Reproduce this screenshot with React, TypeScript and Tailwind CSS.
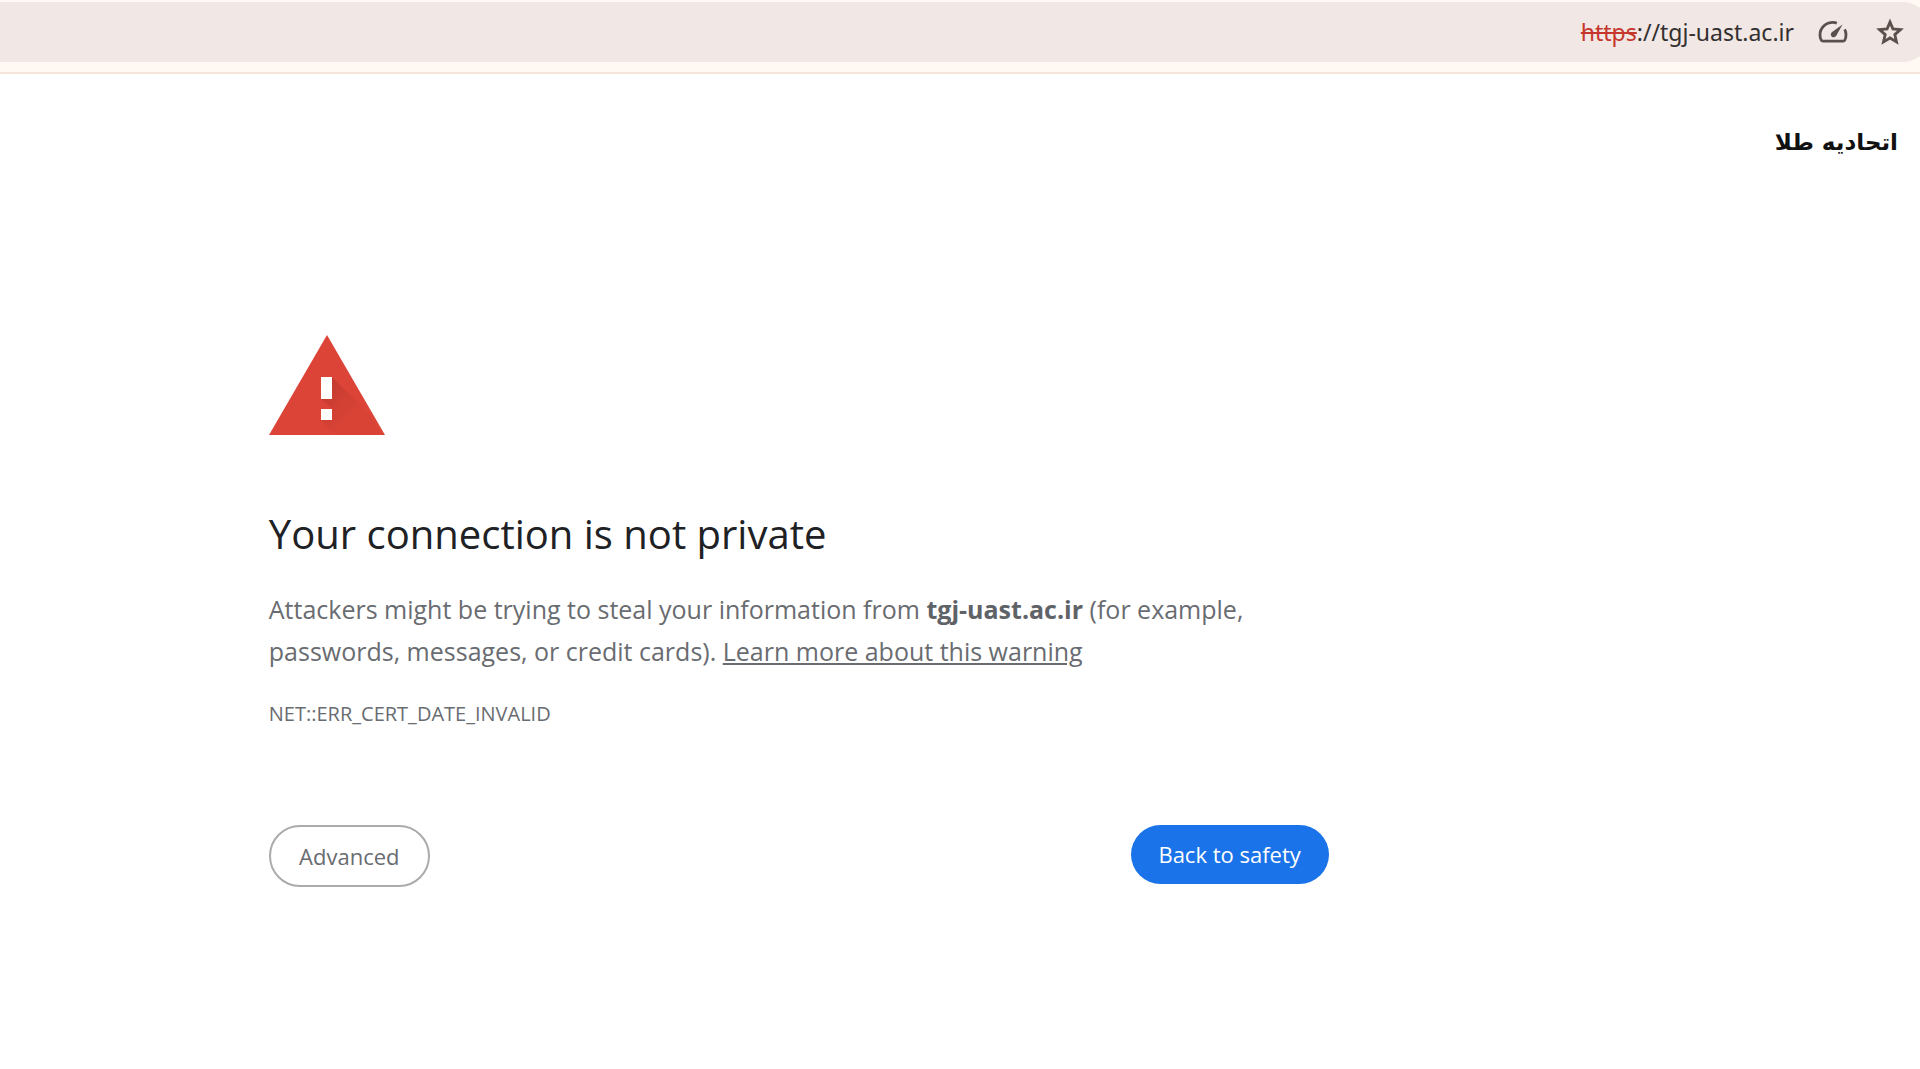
function SpeedIcon() {
  return (
    <svg width="30" height="24" viewBox="0 0 30 24" fill="none">
      <path
        d="M18.8 3.2C17.6 2.6 16.3 2.4 15 2.4 7.7 2.4 2 8 2 15c0 2.2.5 4.1 1.4 5.4.3.5.8.8 1.4.8h20.4c.6 0 1.1-.3 1.4-.8C27.5 19 28 17 28 15c0-2.2-.4-4-1.3-5.6"
        stroke="#5c504c"
        strokeWidth="2.8"
      />
      <path d="M24.5 4.5 18.4 15.5c-1 1.7-3.2 2.3-4.6 1.2-1.5-1.2-1.3-3.3.3-4.6z" fill="#5c504c" />
    </svg>
  )
}

function StarIcon() {
  return (
    <svg width="28" height="28" viewBox="0 0 28 28" fill="none">
      <path
        d="m14 4 2.9 6.9 7.6.7-5.7 5 1.7 7.3-6.5-3.9-6.5 3.9 1.7-7.3-5.7-5 7.6-.7z"
        stroke="#5c504c"
        strokeWidth="2.8"
      />
    </svg>
  )
}

function WarningIcon() {
  return (
    <svg width="116" height="100" viewBox="0 0 116 100" aria-hidden="true">
      <defs>
        <linearGradient id="shade" gradientUnits="userSpaceOnUse" x1="56" y1="56" x2="84" y2="84">
          <stop offset="0" stopColor="#a52e24" stopOpacity="0.4" />
          <stop offset="1" stopColor="#c0392b" stopOpacity="0.1" />
        </linearGradient>
      </defs>
      <path d="M58 0 116 100H0z" fill="#db4437" />
      <path d="M63 42 100 79 112 100H78L63 85 52 85 63 74 52 64H63z" fill="url(#shade)" />
      <path d="M52 85h11l15 15H67z" fill="url(#shade)" />
      <path d="M52 42h11v22H52zM52 74h11v11H52z" fill="#fff" />
    </svg>
  )
}

function AddressBar() {
  return (
    <header className="overflow-hidden border-b-2 border-[#f5e4da] bg-[#fff8f3] pt-0.5 pb-2.5">
      <div className="-mr-3 flex h-15 items-center justify-end rounded-r-full bg-[#f1e7e4] pr-7">
        <p className="font-['Noto_Sans',sans-serif] text-[23px] text-[#33302f]">
          <span className="text-[#c5372c] line-through">https</span>://tgj-uast.ac.ir
        </p>
        <button type="button" aria-label="Site performance" className="ml-6">
          <SpeedIcon />
        </button>
        <button type="button" aria-label="Bookmark this page" className="ml-7">
          <StarIcon />
        </button>
      </div>
    </header>
  )
}

export default function App() {
  return (
    <div className="min-h-screen bg-white font-['Open_Sans','Noto_Sans',sans-serif]">
      <AddressBar />

      <p
        dir="rtl"
        lang="fa"
        className="px-[22px] pt-[50px] font-['DejaVu_Sans',sans-serif] text-[23px] leading-9 font-bold text-[#111111]"
      >
        اتحادیه طلا
      </p>

      <main className="ml-[14%] w-[55.2%] pt-[175px]">
        <WarningIcon />
        <h1 className="mt-[71px] text-[40px] leading-[56px] text-[#202124]">
          Your connection is not private
        </h1>
        <p className="mt-[26px] text-[25px] leading-[42px] text-[#696c70]">
          Attackers might be trying to steal your information from{' '}
          <strong className="font-bold text-[#5f6368]">tgj-uast.ac.ir</strong> (for example,
          <br />
          passwords, messages, or credit cards).{' '}
          <a href="#learn-more" className="underline">
            Learn more about this warning
          </a>
        </p>
        <p className="mt-[26px] text-[20px] leading-8 text-[#696c70]">NET::ERR_CERT_DATE_INVALID</p>

        <div className="mt-[95px] flex items-start justify-between text-[22px]">
          <button
            type="button"
            className="h-[62px] w-[161px] rounded-full border-2 border-[#a9abad] text-[#696c70]"
          >
            Advanced
          </button>
          <button type="button" className="h-[59px] w-[198px] rounded-full bg-[#1a73e8] text-white">
            Back to safety
          </button>
        </div>
      </main>
    </div>
  )
}
